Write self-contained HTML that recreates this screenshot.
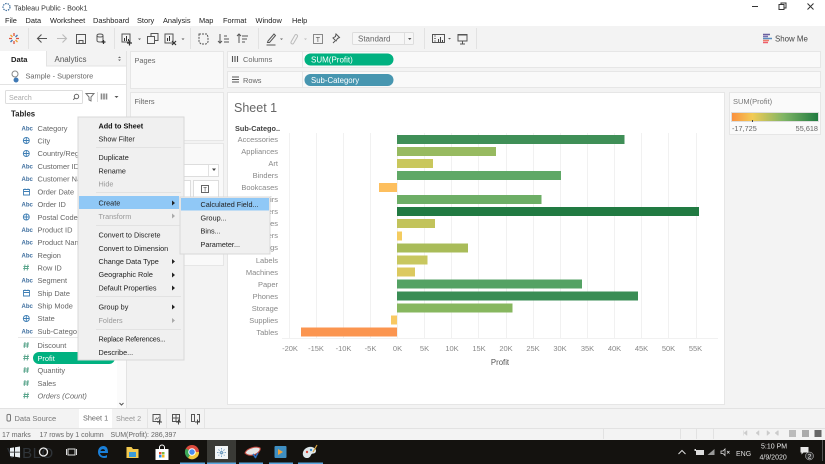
<!DOCTYPE html>
<html><head><meta charset="utf-8"><style>
html,body{margin:0;padding:0;background:#f3f3f3;width:825px;height:464px;overflow:hidden}
svg{display:block;filter:blur(.35px)}
text{font-family:"Liberation Sans",sans-serif;font-size:7.4px;fill:#555}
.m text{fill:#222;font-size:7.25px}
.l text{fill:#666;font-size:7.4px}
.r text{fill:#888;font-size:7.5px;text-anchor:end}
.a text{fill:#888;font-size:7.5px;text-anchor:middle}
.g line{stroke:#f1f1f1;stroke-width:1}
.ic{fill:none;stroke:#555;stroke-width:1}
.ab{font-size:6px;fill:#3f6f9f;font-weight:bold}
</style></head><body>
<svg width="825" height="464" viewBox="0 0 825 464" xmlns="http://www.w3.org/2000/svg">
<rect width="825" height="464" fill="#f3f3f3"/>
<rect width="825" height="26" fill="#fff"/>
<circle cx="6.500" cy="7" r="3.500" fill="none" stroke="#3f6f9f" stroke-width="1.200" stroke-dasharray="1.500 1"/>
<text x="14" y="10.300" style="font-size:7.200px;fill:#333">Tableau Public - Book1</text>
<g><text x="5" y="23" style="fill:#222">File</text><text x="25.500" y="23" style="fill:#222">Data</text><text x="50" y="23" style="fill:#222">Worksheet</text><text x="93" y="23" style="fill:#222">Dashboard</text><text x="137" y="23" style="fill:#222">Story</text><text x="163" y="23" style="fill:#222">Analysis</text><text x="199" y="23" style="fill:#222">Map</text><text x="223" y="23" style="fill:#222">Format</text><text x="255.500" y="23" style="fill:#222">Window</text><text x="292" y="23" style="fill:#222">Help</text></g>
<!-- window controls -->
<path d="M752 6.500h6" stroke="#333"/><path class="ic" style="stroke:#333" d="M779 4.500h5v5h-5zM781 4.500v-1.500h5v5h-2"/><path d="M807.500 3.500l6 6M813.500 3.500l-6 6" stroke="#333" fill="none"/>
<!-- toolbar -->
<rect y="26" width="825" height="24" fill="#f3f3f3"/>
<g stroke="#e2e2e2"><path d="M28.500 28v21M114.500 28v21M190.500 28v21M258.500 28v21M424.500 28v21M476.500 28v21"/></g>
<g fill="none" stroke-width="1.300"><path d="M14 33v3M14 41v3M9 38.500h3M16 38.500h3" stroke="#e0533d"/><path d="M10.500 35l2 2M15.500 40l2 2" stroke="#f0a030"/><path d="M17.500 35l-2 2M12.500 40l-2 2" stroke="#3f79b5"/></g>
<path d="M47 38.500H37.500M41.500 34.500l-4 4 4 4" fill="none" stroke="#555" stroke-width="1.100"/>
<path d="M57 38.500h9.500M62.500 34.500l4 4-4 4" fill="none" stroke="#bbb" stroke-width="1.100"/>
<path class="ic" d="M76.500 34.500h9v9h-9zM79 43.500v-3h4v3"/>
<path class="ic" d="M97 35.500c0-2 6-2 6 0v5c0 1-1.500 1.500-3 1.500s-3-.5-3-1.500zM97 35.500c0 2 6 2 6 0"/><path d="M101.500 42h4M103.500 40v4" stroke="#333" stroke-width="1.200"/>
<path class="ic" d="M122 34h8v8h-8z"/><path d="M124.500 41v-3M126.500 41v-5M128.500 41v-2" stroke="#333"/><path d="M127 43h5M129.500 40.500v5" stroke="#333" stroke-width="1.200"/>
<path d="M138 38.500h3l-1.500 1.500z" fill="#555"/>
<path class="ic" d="M147.500 36.500h7v7h-7zM151 36.500v-3h7v7h-3.500"/>
<path class="ic" d="M165 34h8v9h-8z"/><path d="M167.500 41v-3M169.500 41v-5" stroke="#333"/><path d="M172 41l4 4M176 41l-4 4" stroke="#333" stroke-width="1.200"/>
<path d="M181.500 38.500h3l-1.500 1.500z" fill="#555"/>
<path class="ic" stroke-dasharray="2 1" d="M199 34h8l1 3v5l-2 2h-5l-2-2z"/>
<path class="ic" d="M220 34v9M218 41l2 2 2-2M224 36h3M224 39h5M224 42h5"/>
<path class="ic" d="M239 34v9M237 36l2-2 2 2M242 36h6M242 39h5M242 42h3"/>
<path class="ic" d="M268 41l6-7 1.500 1.500-6 7h-2zM266.500 45h9"/><path d="M280 38.500h3l-1.500 1.500z" fill="#666"/>
<path d="M291 42l4-7a1.500 1.500 0 0 1 2.500 1.500l-4 7a1.500 1.500 0 0 1-2.500-1.500" fill="none" stroke="#bbb"/><path d="M304 38.500h3l-1.500 1.500z" fill="#bbb"/>
<rect x="313.500" y="34.500" width="9" height="9" fill="none" stroke="#888"/><text x="315.800" y="42" style="font-size:7px;fill:#555">T</text>
<path class="ic" d="M336 34l3.500 3.500-2 1-1.500 2.500-3-3 2.500-1.500zM333 43l2-2"/>
<rect x="352.500" y="32.500" width="61" height="12" rx="1" fill="#f6f6f6" stroke="#ddd"/>
<text x="358" y="41.300" style="font-size:8px;fill:#666">Standard</text>
<path d="M404.500 33v11" stroke="#ddd"/><path d="M408 38h3.500l-1.750 2z" fill="#555"/>
<path class="ic" d="M432.500 34.500h12v8h-12z"/><path d="M438.500 42v-3M440.500 42v-5M442.500 42v-2" stroke="#444"/><path d="M434 36h2M434 38.500h2M434 41h2" stroke="#888"/>
<path d="M448 38h3l-1.500 1.500z" fill="#555"/>
<path class="ic" d="M458 35h9v6h-9zM457.500 34.500h10M462.500 41v3M460 44h5"/>
<path d="M763 34.500h7" stroke="#6a5f9e" stroke-width="1.500"/><path d="M763 36.500h5" stroke="#7b6fb0" stroke-width="1.500"/><path d="M763 38.500h9" stroke="#5a8ec0" stroke-width="1.500"/><path d="M763 40.500h6" stroke="#ee7d6b" stroke-width="1.500"/><path d="M763 42.500h5" stroke="#ee5d6b" stroke-width="1.500"/>
<text x="775" y="41.500" style="font-size:7.900px;fill:#444">Show Me</text>

<!-- left data pane -->
<rect x="0" y="51" width="126" height="358" fill="#fff"/>
<rect x="47" y="51" width="80" height="15" fill="#f3f3f3"/>
<path d="M46.500 51v15H126" fill="none" stroke="#e3e3e3"/>
<path d="M126.500 51v358" stroke="#e3e3e3"/>
<text x="11" y="62" style="font-size:7.600px;fill:#222;font-weight:bold">Data</text>
<text x="54.500" y="62" style="font-size:8px;fill:#555">Analytics</text>
<path d="M118 58l1.500-1.500 1.500 1.500zM118 59.500l1.500 1.500 1.500-1.500z" fill="#666"/>
<circle cx="15" cy="74" r="3" fill="none" stroke="#888"/><path d="M16 77.500a2.500 2.500 0 1 0 .1 0z" fill="#3f79b5"/>
<text x="25.500" y="78.500" style="fill:#666;font-size:7.400px">Sample - Superstore</text>
<path d="M0 84.500h126" stroke="#e3e3e3"/>
<rect x="5.500" y="90.500" width="77" height="13" rx="1" fill="#fff" stroke="#ddd"/>
<text x="9" y="100" style="font-size:7.200px;fill:#aaa">Search</text>
<circle cx="76.500" cy="96.500" r="2.200" fill="none" stroke="#666"/><path d="M75 98l-1.800 1.800" stroke="#666"/>
<path d="M86 93.500h8l-3 3.500v4l-2-1v-3z" fill="none" stroke="#777"/>
<path d="M97.500 92v10" stroke="#ddd"/>
<path d="M101.500 93.500v6M104 93.500v6M106.500 93.500v6" stroke="#888" stroke-width="1.600"/>
<path d="M114.500 96h4l-2 2z" fill="#555"/>
<text x="11" y="116.500" style="font-size:7.800px;fill:#222;font-weight:bold">Tables</text>

<g class="l">
<text x="37.500" y="131">Category</text><text x="37.500" y="143.500">City</text><text x="37.500" y="156">Country/Region</text><text x="37.500" y="169">Customer ID</text><text x="37.500" y="181.500">Customer Name</text><text x="37.500" y="194.500">Order Date</text><text x="37.500" y="207">Order ID</text><text x="37.500" y="220">Postal Code</text><text x="37.500" y="232.500">Product ID</text><text x="37.500" y="245">Product Name</text><text x="37.500" y="258">Region</text><text x="37.500" y="270.500">Row ID</text><text x="37.500" y="283">Segment</text><text x="37.500" y="296">Ship Date</text><text x="37.500" y="308.500">Ship Mode</text><text x="37.500" y="321">State</text><text x="37.500" y="334">Sub-Category</text><text x="37.500" y="348">Discount</text><text x="37.500" y="373">Quantity</text><text x="37.500" y="386">Sales</text><text x="37.500" y="398.500" font-style="italic">Orders (Count)</text>
</g>
<g>
<text x="21.500" y="130.500" class="ab">Abc</text><text x="21.500" y="168.500" class="ab">Abc</text><text x="21.500" y="181" class="ab">Abc</text><text x="21.500" y="206.500" class="ab">Abc</text><text x="21.500" y="232" class="ab">Abc</text><text x="21.500" y="244.500" class="ab">Abc</text><text x="21.500" y="257.500" class="ab">Abc</text><text x="21.500" y="282.500" class="ab">Abc</text><text x="21.500" y="308" class="ab">Abc</text><text x="21.500" y="333.500" class="ab">Abc</text>
</g>
<g fill="none" stroke="#3f7fb5" stroke-width=".9">
<circle cx="26.300" cy="140.500" r="3"/><path d="M23.300 140.500h6M26.300 137.500v6"/>
<circle cx="26.300" cy="153.500" r="3"/><path d="M23.300 153.500h6M26.300 150.500v6"/>
<circle cx="26.300" cy="217" r="3"/><path d="M23.300 217h6M26.300 214v6"/>
<circle cx="26.300" cy="318.500" r="3"/><path d="M23.300 318.500h6M26.300 315.500v6"/>
<path d="M23.500 189.500h6v5.500h-6zM23.500 191.500h6M25 188.500v1.500M28 188.500v1.500"/>
<path d="M23.500 290.500h6v5.500h-6zM23.500 292.500h6M25 289.500v1.500M28 289.500v1.500"/>
</g>
<g fill="none" stroke="#5aa58c" stroke-width=".9">
<path d="M25 264.500l-.8 6M28 264.500l-.8 6M23.500 266.500h5.500M23.200 268.500h5.500"/>
<path d="M25 342l-.8 6M28 342l-.8 6M23.500 344h5.500M23.200 346h5.500"/>
<path d="M25 354.500l-.8 6M28 354.500l-.8 6M23.500 356.500h5.500M23.200 358.500h5.500"/>
<path d="M25 367l-.8 6M28 367l-.8 6M23.500 369h5.500M23.200 371h5.500"/>
<path d="M25 380l-.8 6M28 380l-.8 6M23.500 382h5.500M23.200 384h5.500"/>
<path d="M25 392.500l-.8 6M28 392.500l-.8 6M23.500 394.500h5.500M23.200 396.500h5.500"/>
</g>
<path d="M18 337.500h99" stroke="#e8e8e8"/>
<rect x="33" y="352" width="82" height="12" rx="6" fill="#00b180"/>
<text x="37.500" y="360.800" style="fill:#fff;font-size:7.400px">Profit</text>
<rect x="117" y="337" width="9" height="72" fill="#fbfbfb"/>
<path d="M119.500 403l2 2 2-2" fill="none" stroke="#555"/>

<!-- pages / filters / marks -->
<g fill="#f9f9f9" stroke="#e6e6e6">
<rect x="130.500" y="51.500" width="93" height="37"/>
<rect x="130.500" y="92.500" width="93" height="48"/>
<rect x="130.500" y="143.500" width="93" height="122"/>
</g>
<text x="134.500" y="63" style="fill:#666">Pages</text>
<text x="134.500" y="104" style="fill:#666">Filters</text>
<rect x="135.500" y="164.500" width="83" height="12" fill="#fff" stroke="#ddd"/><path d="M212 168.500h4l-2 2.500z" fill="#444"/><path d="M208.500 165v11" stroke="#e2e2e2"/>
<g fill="#fff" stroke="#ddd"><rect x="135.500" y="180.500" width="28" height="26"/><rect x="163.500" y="180.500" width="27" height="26"/><rect x="193.500" y="180.500" width="25" height="26"/></g>
<rect x="201.500" y="185.500" width="7" height="7" fill="none" stroke="#666"/><text x="203.300" y="191.500" style="font-size:6px;fill:#444">T</text>

<!-- shelves -->
<g fill="#f9f9f9" stroke="#e6e6e6">
<rect x="227.500" y="51.500" width="593" height="16"/>
<rect x="227.500" y="71.500" width="593" height="16"/>
</g>
<path d="M302.500 52v15M302.500 72v15" stroke="#e6e6e6"/>
<path d="M232.500 56v6M235 56v6M237.500 56v6" stroke="#555" stroke-width="1.100"/>
<text x="243" y="62" style="fill:#666">Columns</text>
<path d="M232 77h7M232 79.500h7M232 82h7" stroke="#555"/>
<text x="243" y="83" style="fill:#666">Rows</text>
<rect x="304.500" y="53.500" width="89" height="12" rx="6" fill="#00b180"/>
<text x="311" y="62.300" style="fill:#fff;font-size:8px">SUM(Profit)</text>
<rect x="304.500" y="74" width="89" height="12" rx="6" fill="#4796b0"/>
<text x="311" y="82.800" style="fill:#fff;font-size:7.800px">Sub-Category</text>

<!-- sheet -->
<rect x="227.500" y="92.500" width="497" height="312" fill="#fff" stroke="#e6e6e6"/>
<text x="234" y="112" style="font-size:12.500px;fill:#666">Sheet 1</text>
<text x="235" y="131" style="font-size:7.300px;fill:#444;font-weight:bold">Sub-Catego..</text>
<g class="g">
<line x1="289.500" y1="133" x2="289.500" y2="338"/><line x1="316.500" y1="133" x2="316.500" y2="338"/><line x1="343.500" y1="133" x2="343.500" y2="338"/><line x1="370.500" y1="133" x2="370.500" y2="338"/><line x1="397.500" y1="133" x2="397.500" y2="338"/><line x1="424.500" y1="133" x2="424.500" y2="338"/><line x1="451.500" y1="133" x2="451.500" y2="338"/><line x1="478.500" y1="133" x2="478.500" y2="338"/><line x1="506.500" y1="133" x2="506.500" y2="338"/><line x1="533.500" y1="133" x2="533.500" y2="338"/><line x1="560.500" y1="133" x2="560.500" y2="338"/><line x1="587.500" y1="133" x2="587.500" y2="338"/><line x1="614.500" y1="133" x2="614.500" y2="338"/><line x1="641.500" y1="133" x2="641.500" y2="338"/><line x1="668.500" y1="133" x2="668.500" y2="338"/><line x1="696.500" y1="133" x2="696.500" y2="338"/>
<line x1="282" y1="338.500" x2="718" y2="338.500"/>
</g>
<g class="r">
<text x="278" y="142">Accessories</text><text x="278" y="154">Appliances</text><text x="278" y="166">Art</text><text x="278" y="178">Binders</text><text x="278" y="190">Bookcases</text><text x="278" y="202">Chairs</text><text x="278" y="214">Copiers</text><text x="278" y="226">Envelopes</text><text x="278" y="238">Fasteners</text><text x="278" y="250">Furnishings</text><text x="278" y="263">Labels</text><text x="278" y="275">Machines</text><text x="278" y="287">Paper</text><text x="278" y="299">Phones</text><text x="278" y="311">Storage</text><text x="278" y="323">Supplies</text><text x="278" y="335">Tables</text>
</g>
<g>
<rect x="397" y="135" width="227.500" height="9" fill="#3f8f57"/>
<rect x="397" y="147" width="99" height="9" fill="#97ba60"/>
<rect x="397" y="159" width="36" height="9" fill="#c9c75c"/>
<rect x="397" y="171" width="164" height="9" fill="#5fa866"/>
<rect x="379" y="183" width="18" height="9" fill="#fdbf5e"/>
<rect x="397" y="195" width="144.500" height="9" fill="#6dae66"/>
<rect x="397" y="207" width="302" height="9" fill="#217a42"/>
<rect x="397" y="219" width="38" height="9" fill="#c2c35b"/>
<rect x="397" y="231.500" width="5" height="9" fill="#f4cc60"/>
<rect x="397" y="243.500" width="71" height="9" fill="#a9bc59"/>
<rect x="397" y="255.500" width="30.500" height="9" fill="#c8c75f"/>
<rect x="397" y="267.500" width="18" height="9" fill="#dcc95f"/>
<rect x="397" y="279.500" width="185" height="9" fill="#54a264"/>
<rect x="397" y="291.500" width="241" height="9" fill="#3a8d55"/>
<rect x="397" y="303.500" width="115.500" height="9" fill="#87b75f"/>
<rect x="391" y="315.500" width="6" height="9" fill="#f8c963"/>
<rect x="301" y="327.500" width="96" height="9" fill="#fb9550"/>
</g>
<g class="a">
<text x="290" y="351">-20K</text><text x="316" y="351">-15K</text><text x="343.500" y="351">-10K</text><text x="370.500" y="351">-5K</text><text x="397.500" y="351">0K</text><text x="424.500" y="351">5K</text><text x="452" y="351">10K</text><text x="479" y="351">15K</text><text x="506" y="351">20K</text><text x="533" y="351">25K</text><text x="560" y="351">30K</text><text x="587.500" y="351">35K</text><text x="614.500" y="351">40K</text><text x="641.500" y="351">45K</text><text x="668.500" y="351">50K</text><text x="695.500" y="351">55K</text>
</g>
<text x="500" y="365" text-anchor="middle" style="font-size:7.800px;fill:#555">Profit</text>

<!-- legend -->
<rect x="729.500" y="92.500" width="91" height="42" fill="#fafafa" stroke="#e6e6e6"/>
<text x="733" y="104" style="font-size:7.500px;fill:#777">SUM(Profit)</text>
<defs><linearGradient id="lg"><stop offset="0" stop-color="#fb8f3f"/><stop offset=".24" stop-color="#f2cb55"/><stop offset=".6" stop-color="#7fb565"/><stop offset="1" stop-color="#1f7a40"/></linearGradient></defs>
<rect x="731.500" y="112.500" width="87" height="9" fill="url(#lg)" stroke="#ddd"/>
<path d="M752.500 120v2" stroke="#444"/>
<text x="732" y="131" style="font-size:7.300px;fill:#666">-17,725</text>
<text x="818" y="131" text-anchor="end" style="font-size:7.300px;fill:#666">55,618</text>

<!-- context menu -->
<rect x="78" y="117" width="106" height="243" fill="#f0f0f0" stroke="#d8d8d8"/>
<rect x="79" y="196" width="100" height="13" fill="#90c8f6"/>
<path d="M96 147.500h85M96 192.500h85M96 225.500h85M96 296.500h85M96 329.500h85" stroke="#e2e2e2"/>
<g class="m">
<text x="98.500" y="128.500" font-weight="bold" style="fill:#111">Add to Sheet</text><text x="98.500" y="141.500">Show Filter</text><text x="98.500" y="160">Duplicate</text><text x="98.500" y="173.500">Rename</text><text x="98.500" y="186.500" style="fill:#999">Hide</text><text x="98.500" y="205.500">Create</text><text x="98.500" y="219" style="fill:#999">Transform</text><text x="98.500" y="237.500">Convert to Discrete</text><text x="98.500" y="251">Convert to Dimension</text><text x="98.500" y="264">Change Data Type</text><text x="98.500" y="277">Geographic Role</text><text x="98.500" y="290.500">Default Properties</text><text x="98.500" y="309.500">Group by</text><text x="98.500" y="323" style="fill:#999">Folders</text><text x="98.500" y="341.500" textLength="67">Replace References...</text><text x="98.500" y="355">Describe...</text>
</g>
<g fill="#222"><path d="M172 200.500l3 2.500-3 2.500zM172 259l3 2.500-3 2.500zM172 272.500l3 2.500-3 2.500zM172 285.500l3 2.500-3 2.500zM172 304.500l3 2.500-3 2.500z"/></g>
<g fill="#aaa"><path d="M172 213.500l3 2.500-3 2.500zM172 318l3 2.500-3 2.500z"/></g>
<!-- submenu -->
<rect x="180" y="197" width="90" height="57" fill="#f0f0f0" stroke="#d8d8d8"/>
<rect x="181" y="198" width="88" height="12.500" fill="#90c8f6"/>
<g class="m"><text x="200.500" y="207">Calculated Field...</text><text x="200.500" y="220.500">Group...</text><text x="200.500" y="233.500">Bins...</text><text x="200.500" y="247">Parameter...</text></g>

<!-- bottom tabs -->
<rect y="409" width="825" height="19" fill="#f3f3f3"/>
<path d="M0 408.500h825M0 428.500h825" stroke="#e2e2e2"/>
<rect x="79" y="409" width="33" height="19" fill="#fff"/>
<path d="M147.500 409v19M166.500 409v19M185.500 409v19M204.500 409v19" stroke="#e4e4e4"/>
<path class="ic" style="stroke:#777" d="M7 415.500c0-1.500 3.500-1.500 3.500 0v4.500c0 1.500-3.500 1.500-3.500 0z"/>
<text x="14.500" y="421" style="font-size:7.500px;fill:#777">Data Source</text>
<text x="83" y="420.500" style="font-size:7.300px;fill:#666">Sheet 1</text>
<text x="116" y="421" style="font-size:7.300px;fill:#999">Sheet 2</text>
<path class="ic" d="M153 414.500h7v7h-7z"/><path d="M155 420l1.500-2 1 1 1.500-2" stroke="#777" fill="none"/><path d="M157 422h5M159.500 419.500v5" stroke="#444"/>
<path class="ic" d="M172.500 414.500h7v7h-7zM172.500 418h7M176 414.500v7"/><path d="M176 422h5M178.500 419.500v5" stroke="#444"/>
<path class="ic" d="M191.500 414.500h3v7h-3zM197 414.500h2.500v7H197"/><path d="M195 422h5M197.500 419.500v5" stroke="#444"/>
<!-- status -->
<rect y="429" width="825" height="11" fill="#f3f3f3"/>
<text x="2" y="436.800" style="font-size:7px;fill:#666">17 marks</text>
<text x="39.500" y="436.800" style="font-size:7px;fill:#666">17 rows by 1 column</text>
<text x="110.500" y="436.800" style="font-size:7px;fill:#666">SUM(Profit): 286,397</text>
<path d="M603.500 429v10M680.500 429v10M696.500 429v10M713.500 429v10" stroke="#e2e2e2"/>
<path d="M747 430.500v5l-3-2.500zM743.500 430.500v5M759 430.500v5l-3-2.500zM767 430.500v5l3-2.500zM778 430.500v5l-3-2.500zM778.500 430.500v5" fill="#ccc" stroke="#ccc" stroke-width=".5"/>
<rect x="789" y="430" width="7" height="7" fill="#bbb"/><rect x="802" y="430" width="7" height="7" fill="#aaa"/><rect x="814.500" y="430" width="7" height="7" fill="#666"/>

<!-- taskbar -->
<rect y="440" width="825" height="24" fill="#14120f"/>
<rect x="207" y="440" width="29" height="24" fill="#3a3a36"/>
<text x="7" y="458" style="font-size:15px;fill:#2f3439;letter-spacing:.5px">VIBLO</text>
<path d="M10 448l4-.6v4.300h-4zM15 447.200l5-.7v5.200h-5zM10 452.500h4v4.200l-4-.6zM15 452.500h5v5l-5-.7z" fill="#e8eef2"/>
<circle cx="43.500" cy="452" r="4" fill="none" stroke="#eee" stroke-width="1.300"/>
<path d="M68 449h7v6h-7zM66.500 449v6M76.500 449v6" fill="none" stroke="#ddd"/>
<path d="M108 453h-8c.4 3 4.500 4 7 2v2.500c-4 1.500-9-.5-9-5.500 0-5.500 5-7 7.500-5.500 2 1 2.500 3.500 2.500 6.500zM105 451c0-2.500-4-2.500-4.500 0z" fill="#1a7fd8" fill-rule="evenodd"/>
<path d="M126.500 447h5l1.500 2h5.500v9h-12z" fill="#f3c94e"/><rect x="129" y="452" width="7" height="5" fill="#3b9ad6"/>
<rect x="155.500" y="449" width="13" height="11" fill="#fff"/><path d="M159.500 449v-1.500a2.500 2.500 0 0 1 5 0v1.500" fill="none" stroke="#fff"/><rect x="159" y="452" width="2.500" height="2.500" fill="#e2502f"/><rect x="162" y="452" width="2.500" height="2.500" fill="#7db93f"/><rect x="159" y="455" width="2.500" height="2.500" fill="#2a8de0"/><rect x="162" y="455" width="2.500" height="2.500" fill="#f4b81c"/>
<circle cx="192" cy="452" r="7" fill="#dd4b3e"/><path d="M192 452L199 452A7 7 0 0 1 188 458z" fill="#f4c63c"/><path d="M192 452l-4 6a7 7 0 0 1-2-9.500z" fill="#3aa757"/><circle cx="192" cy="452" r="3.300" fill="#4a8cf0" stroke="#fff"/>
<rect x="215" y="446" width="13" height="13" fill="#f2f5f7"/><path d="M221.500 448v9M217 452.500h9M218.500 449.500l6 6M224.500 449.500l-6 6" stroke="#5f90b8" stroke-dasharray="1.500 1" stroke-width=".8"/>
<path d="M245 453c2-5 11-7 15-5 1 2-2 6-7 7-3 .6-6 0-8-2z" fill="#e6e6e6" stroke="#c64a40"/><path d="M253 454l3 4M258 453l-3 5" stroke="#2f6fc0" stroke-width="1.500"/>
<rect x="274.500" y="446" width="12" height="12" rx="1" fill="#3f8fc2"/><path d="M278 449l5 3-5 3z" fill="#f2a33a"/>
<path d="M303 455c-1-5 4-9 9-8 4 1 5 4 3 6-2 1-3 0-4 2s-2 3-4 3-3.500-1-4-3z" fill="#dfe7ea"/><circle cx="307" cy="452" r="1.200" fill="#d84b3e"/><circle cx="311" cy="450" r="1.200" fill="#3f90d0"/><path d="M313 452l4-7" stroke="#d9a441" stroke-width="1.200"/>
<g fill="#5aa7de"><rect x="180" y="462.500" width="25" height="1.500"/><rect x="207" y="462.500" width="29" height="1.500"/><rect x="239" y="462.500" width="24" height="1.500"/><rect x="269" y="462.500" width="24" height="1.500"/><rect x="298" y="462.500" width="25" height="1.500"/></g>
<!-- tray -->
<path d="M678.500 454l3.500-3.500 3.500 3.500" fill="none" stroke="#ddd"/>
<rect x="696" y="450" width="8" height="5" fill="#ddd"/><rect x="694.500" y="449" width="1.500" height="2" fill="#ddd"/>
<path d="M707.500 455l7-6v6z" fill="#999"/>
<path d="M721 451h2l2-2v6.500l-2-2h-2zM727 451l2.500 2.500M729.500 451l-2.500 2.500" fill="none" stroke="#ddd" stroke-width=".8"/>
<text x="736" y="455.800" style="font-size:7px;fill:#ddd">ENG</text>
<text x="761" y="448.500" style="font-size:7px;fill:#e8e8e8">5:10 PM</text>
<text x="759.500" y="459.500" style="font-size:7px;fill:#e8e8e8">4/9/2020</text>
<path d="M800.500 447h8v5.500h-5l-2 2v-2h-1z" fill="#e8e8e8"/>
<circle cx="809.500" cy="456" r="4" fill="#333" stroke="#ccc" stroke-width=".5"/><text x="807.800" y="458.500" style="font-size:6.500px;fill:#fff">2</text>
<path d="M822.500 440v21" stroke="#555"/>
</svg>
</body></html>
